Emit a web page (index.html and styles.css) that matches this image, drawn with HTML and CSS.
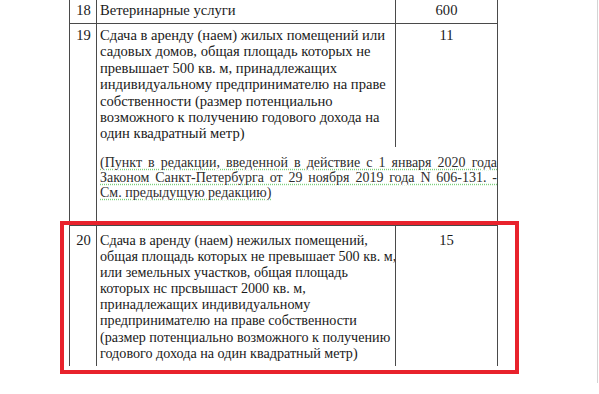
FILE: index.html
```html
<!DOCTYPE html>
<html lang="ru">
<head>
<meta charset="utf-8">
<link rel="stylesheet" href="styles.css">
</head>
<body>
<div class="page">
  <div class="table">
    <div class="c num r18">18</div>
    <div class="c txt r18">Ветеринарные услуги</div>
    <div class="c val r18 last">600</div>

    <div class="c num r19 tall">19</div>
    <div class="c txt r19">
      <span class="ln">Сдача в аренду (наем) жилых помещений или</span>
      <span class="ln">садовых домов, общая площадь которых не</span>
      <span class="ln">превышает 500 кв. м, принадлежащих</span>
      <span class="ln">индивидуальному предпринимателю на праве</span>
      <span class="ln">собственности (размер потенциально</span>
      <span class="ln">возможного к получению годового дохода на</span>
      <span class="ln">один квадратный метр)</span>
    </div>
    <div class="c val r19 last">11</div>
    <div class="c note last">
      <span class="nl j">(Пункт в редакции, введенной в действие с 1 января 2020 года</span>
      <span class="nl j">Законом Санкт-Петербурга от 29 ноября 2019 года N 606-131. -</span>
      <span class="nl">См. предыдущую редакцию)</span>
    </div>

    <div class="c num r20">20</div>
    <div class="c txt r20">
      <span class="ln">Сдача в аренду (наем) нежилых помещений,</span>
      <span class="ln j">общая площадь которых не превышает 500 кв. м,</span>
      <span class="ln">или земельных участков, общая площадь</span>
      <span class="ln">которых нс прсвышаст 2000 кв. м,</span>
      <span class="ln">принадлежащих индивидуальному</span>
      <span class="ln">предпринимателю на праве собственности</span>
      <span class="ln">(размер потенциально возможного к получению</span>
      <span class="ln">годового дохода на один квадратный метр)</span>
    </div>
    <div class="c val r20 last">15</div>
  </div>
  <div class="highlight"></div>
</div>
</body>
</html>
```

FILE: styles.css
```css
* { box-sizing: border-box; }
html, body { margin: 0; padding: 0; background: #fff; }
body {
  font-family: "Liberation Serif", "Times New Roman", serif;
  color: #1a1a1a;
  width: 599px;
  height: 394px;
  overflow: hidden;
}
.page {
  position: relative;
  width: 598px;
  height: 383px;
  border-right: 1px solid #d4d4d4;
  padding-left: 69px;
}
.table {
  display: grid;
  grid-template-columns: 27px 299px 103px;
  grid-template-rows: 24px 123px 78px 141px;
  width: 430px;
}
.c {
  border-left: 1px solid #4a4a4a;
  font-size: 14.6px;
  line-height: 16.4px;
}
.last { border-right: 1px solid #4a4a4a; }
.num { text-align: center; padding-left: 1px; }
.txt { padding-left: 3px; }
.val { text-align: center; }
.r18 { padding-top: 2px; border-bottom: 1px solid #4a4a4a; }
.r19 { padding-top: 3px; }
.num.tall { grid-row: 2 / span 2; }
.r20 {
  padding-top: 6px;
  border-top: 1px solid #4a4a4a;
  line-height: 16.1px;
}
.txt.r20 { font-size: 14.15px; }
.ln { display: block; white-space: nowrap; }
.ln.j { text-align: justify; text-align-last: justify; width: 295px; }
.note {
  grid-column: 2 / span 2;
  padding: 8px 0 0 3px;
  color: #2e2e2e;
  line-height: 15px;
  font-size: 14px;
}
.nl {
  display: block;
  white-space: nowrap;
  width: 397px;
  text-decoration: underline dotted #7ccf7c;
  text-underline-offset: 2px;
}
.nl.j { text-align: justify; text-align-last: justify; }
.nl:last-child { width: auto; display: inline-block; }
.highlight {
  position: absolute;
  left: 60px;
  top: 221px;
  width: 459px;
  height: 153px;
  border: 4px solid #e8222c;
}
```
